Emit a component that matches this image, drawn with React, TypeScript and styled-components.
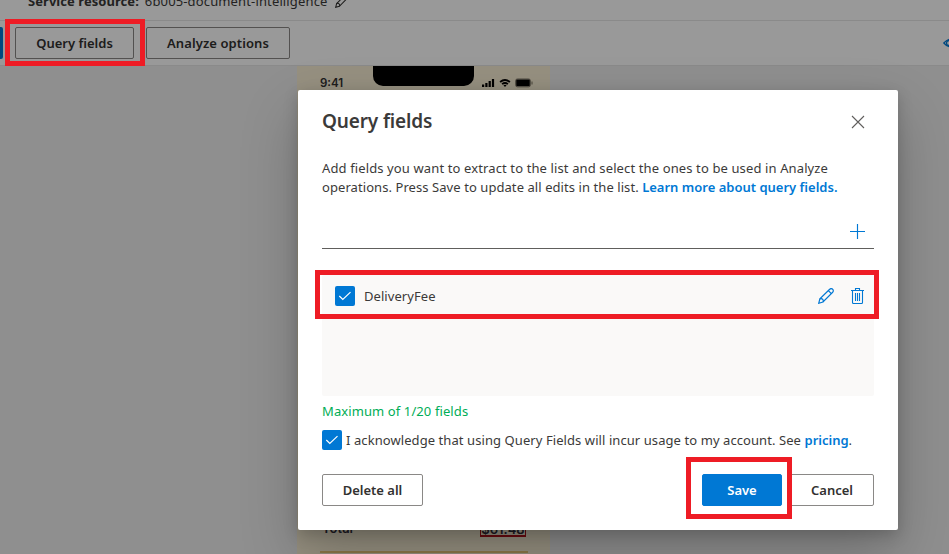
import React from "react";
import styled, { createGlobalStyle } from "styled-components";

const GlobalStyle = createGlobalStyle`
  *, *::before, *::after { box-sizing: border-box; }
  html, body { margin: 0; padding: 0; overflow: hidden; }
  body {
    font-family: "Noto Sans", "Open Sans", sans-serif;
    font-size: 13px;
    color: #3b3a39;
  }
  p, h2 { margin: 0; }
  button { font-family: inherit; }
`;

const Page = styled.div`
  position: relative;
  width: 949px;
  height: 554px;
  overflow: hidden;
  display: flex;
  flex-direction: column;
  background: #fff;
`;

const ResourceBar = styled.div`
  flex: none;
  display: flex;
  align-items: center;
  gap: 6px;
  height: 21px;
  padding: 0 0 19px 28px;
  border-bottom: 1px solid #e6e6e6;
  white-space: nowrap;
  font-size: 13px;
  line-height: 18px;
`;

const ResourceLabel = styled.span`
  font-weight: 700;
  letter-spacing: 0.05px;
`;

const ResourceName = styled.span`
  margin-right: 1px;
  letter-spacing: 0.14px;
`;

const Toolbar = styled.div`
  flex: none;
  display: flex;
  align-items: center;
  height: 45px;
  border-bottom: 1px solid #e6e6e6;
`;

const RunStub = styled.div`
  flex: none;
  width: 3px;
  height: 32px;
  margin-right: 12px;
  background: #0078d4;
  border-radius: 0 2px 2px 0;
`;

const Button = styled.button<{ $width: number; $primary?: boolean; $spacing?: number }>`
  flex: none;
  width: ${(p) => p.$width}px;
  height: 32px;
  padding: 0 0 1px;
  border: 1px solid ${(p) => (p.$primary ? "#0078d4" : "#8a8886")};
  border-radius: 2px;
  background: ${(p) => (p.$primary ? "#0078d4" : "#fff")};
  color: ${(p) => (p.$primary ? "#fff" : "#323130")};
  font-size: 13px;
  font-weight: 600;
  letter-spacing: ${(p) => p.$spacing ?? 0}px;
  white-space: nowrap;
`;

const ToolbarButton = styled(Button)`
  margin-right: 12px;
`;

const EyeIcon = styled.svg`
  flex: none;
  margin-left: 641px;
`;

const Canvas = styled.div`
  flex: 1;
  padding-left: 297px;
  background: #eeeeee;
`;

const Receipt = styled.div`
  display: flex;
  flex-direction: column;
  justify-content: space-between;
  width: 253px;
  height: 488px;
  background: #fbf0d6;
`;

const PhoneStatus = styled.div`
  display: flex;
  align-items: flex-start;
  height: 28px;
  padding-left: 23px;
`;

const Clock = styled.span`
  width: 53px;
  padding-top: 9px;
  font: 600 11.5px/17px Inter, sans-serif;
  color: #333;
`;

const Notch = styled.div`
  width: 101px;
  height: 20px;
  margin-right: 8px;
  background: #000;
  border-radius: 0 0 10px 10px;
`;

const StatusIcons = styled.svg`
  margin-top: 12px;
`;

const TotalBlock = styled.div`
  height: 35px;
  padding: 0 22px 0 23px;
`;

const TotalRow = styled.div`
  display: flex;
  justify-content: space-between;
  align-items: flex-start;
  height: 34px;
  padding: 1px 2px 0 2px;
  border-bottom: 2px solid #e8c878;
  font: 600 13px/17px Inter, sans-serif;
  color: #33313d;
`;

const TotalAmount = styled.span`
  width: 46px;
  height: 17px;
  border: 1px solid #b5121b;
  border-bottom-width: 2px;
  line-height: 16px;
  font-size: 13px;
  text-align: center;
`;

const Scrim = styled.div`
  position: absolute;
  inset: 0;
  background: rgba(0, 0, 0, 0.4);
`;

const Dialog = styled.section`
  position: absolute;
  left: 298px;
  top: 90px;
  width: 600px;
  height: 440px;
  padding: 0 24px 24px;
  display: flex;
  flex-direction: column;
  background: #fff;
  border-radius: 2px;
  box-shadow: 0 25.6px 57.6px rgba(0, 0, 0, 0.22), 0 4.8px 14.4px rgba(0, 0, 0, 0.18);
`;

const DialogHeader = styled.header`
  display: flex;
  align-items: center;
  justify-content: space-between;
  height: 64px;
  padding-right: 9px;
`;

const DialogTitle = styled.h2`
  font-size: 19px;
  font-weight: 600;
  line-height: 26px;
  letter-spacing: -0.15px;
  padding-bottom: 2px;
`;

const Description = styled.p`
  height: 38px;
  margin-top: 5px;
  font-size: 13px;
  line-height: 19px;
  white-space: nowrap;
`;

const Line = styled.span<{ $spacing?: number }>`
  display: block;
  letter-spacing: ${(p) => p.$spacing ?? 0}px;
`;

const Link = styled.a<{ $spacing?: number }>`
  color: #0078d4;
  font-weight: 600;
  letter-spacing: ${(p) => p.$spacing ?? 0}px;
`;

const NewField = styled.div`
  display: flex;
  align-items: center;
  justify-content: flex-end;
  height: 33px;
  margin-top: 19px;
  padding: 0 8px 1px 0;
  border-bottom: 1px solid #605e5c;
`;

const FieldList = styled.div`
  height: 121px;
  margin-top: 26px;
  background: #faf9f8;
  border-radius: 2px;
`;

const FieldRow = styled.div`
  display: flex;
  align-items: center;
  height: 42px;
  padding: 0 10px 0 13px;
`;

const FieldName = styled.span`
  flex: 1;
  margin-left: 9px;
  letter-spacing: 0.06px;
`;

const FieldActions = styled.div`
  display: flex;
  align-items: center;
  gap: 17px;
  padding-bottom: 1px;
`;

const Check = styled.span`
  display: flex;
  flex: none;
  align-items: center;
  justify-content: center;
  width: 20px;
  height: 20px;
  background: #0078d4;
  border-radius: 2px;
`;

const FieldCount = styled.p`
  margin-top: 6px;
  height: 18px;
  line-height: 18px;
  letter-spacing: 0.1px;
  color: #00ad56;
`;

const Acknowledge = styled.div`
  display: flex;
  align-items: center;
  gap: 4px;
  height: 20px;
  margin-top: 10px;
  white-space: nowrap;
`;

const DialogFooter = styled.footer`
  display: flex;
  justify-content: space-between;
  margin-top: 24px;
`;

const FooterActions = styled.div`
  display: flex;
  gap: 8px;
`;

const Highlight = styled.div<{ $x: number; $y: number; $w: number; $h: number }>`
  position: absolute;
  left: ${(p) => p.$x}px;
  top: ${(p) => p.$y}px;
  width: ${(p) => p.$w}px;
  height: ${(p) => p.$h}px;
  border: 5px solid #ee1c25;
  pointer-events: none;
`;

const Pencil = ({ size = 16, color = "#0078d4" }: { size?: number; color?: string }) => (
  <svg width={size} height={size} viewBox="0 0 17 17" fill="none" stroke={color} strokeWidth="1.25">
    <path d="M.8 16.2 2 11.6 12.4 1.3a2.2 2.2 0 0 1 3.2 0 2.2 2.2 0 0 1 0 3.2L5.3 14.9Z" />
    <path d="M2 11.6a2.4 2.4 0 0 1 3.3 3.3M11 2.7l3.2 3.2" />
  </svg>
);

const Trash = () => (
  <svg width="13" height="16" viewBox="0 0 13 16" fill="none" stroke="#0078d4" strokeWidth="1.1">
    <path d="M0 2.5h13M4.5 2.5v-2h4v2M1.5 2.5v12q0 1 1 1h8q1 0 1-1v-12M4.5 5v8M6.5 5v8M8.5 5v8" />
  </svg>
);

const CheckMark = () => (
  <svg width="14" height="10" viewBox="0 0 14 10" fill="none" stroke="#fff" strokeWidth="1.2">
    <path d="m1.3 5 3.5 3.5 7.7-7.4" />
  </svg>
);

export default function App() {
  return (
    <Page>
      <GlobalStyle />
      <ResourceBar>
        <ResourceLabel>Service resource:</ResourceLabel>
        <ResourceName>6b005-document-intelligence</ResourceName>
        <Pencil size={14} color="#323130" />
      </ResourceBar>
      <Toolbar>
        <RunStub />
        <ToolbarButton $width={119}>Query fields</ToolbarButton>
        <ToolbarButton $width={144} $spacing={0.1}>Analyze options</ToolbarButton>
        <EyeIcon width="16" height="10" viewBox="0 0 16 10" fill="none" stroke="#0078d4" strokeWidth="1.3">
          <path d="M.8 5Q8-3 15.2 5 8 13 .8 5Z" />
          <circle cx="6" cy="5" r="2.5" />
        </EyeIcon>
      </Toolbar>
      <Canvas>
        <Receipt>
          <PhoneStatus>
            <Clock>9:41</Clock>
            <Notch />
            <StatusIcons width="52" height="10" viewBox="0 0 52 10" fill="#000">
              <path d="M0 6.5h2.2V9H0zM3.3 5h2.2v4H3.300zM6.600 3h2.200v6H6.600zM9.900 1h2.200v8H9.900z" />
              <path d="M17.500 3.300q5.500-4.400 11 0L27.300 4.800q-4.300-3.400-8.600 0ZM19.500 5.400q3.500-2.800 7 0L25.300 6.800q-2.300-1.700-4.600 0ZM21.400 7.300q1.600-1.200 3.200 0L23 9Z" />
              <rect x="33.5" y=".9" width="15" height="8" rx="2" fill="none" stroke="#77705f" strokeWidth=".8" />
              <rect x="34.2" y="1.5" width="13.600" height="6.800" rx="1" />
              <rect x="49.5" y="3.5" width="1" height="3" fill="#77705f" />
            </StatusIcons>
          </PhoneStatus>
          <TotalBlock>
            <TotalRow>
              <span>Total</span>
              <TotalAmount>$61.48</TotalAmount>
            </TotalRow>
          </TotalBlock>
        </Receipt>
      </Canvas>
      <Scrim />
      <Dialog role="dialog">
        <DialogHeader>
          <DialogTitle>Query fields</DialogTitle>
          <svg width="14" height="14" viewBox="0 0 14 14" stroke="#605e5c" strokeWidth="1.1">
            <path d="m1 1 12 12M13 1 1 13" />
          </svg>
        </DialogHeader>
        <Description>
          <Line $spacing={0.12}>Add fields you want to extract to the list and select the ones to be used in Analyze</Line>
          <Line $spacing={0.07}>
            operations. Press Save to update all edits in the list. <Link>Learn more about query fields.</Link>
          </Line>
        </Description>
        <NewField>
          <svg width="17" height="17" viewBox="0 0 17 17" stroke="#0078d4" strokeWidth="1.15">
            <path d="M1 8.5h15M8.5 1v15" />
          </svg>
        </NewField>
        <FieldList>
          <FieldRow>
            <Check><CheckMark /></Check>
            <FieldName>DeliveryFee</FieldName>
            <FieldActions>
              <Pencil />
              <Trash />
            </FieldActions>
          </FieldRow>
        </FieldList>
        <FieldCount>Maximum of 1/20 fields</FieldCount>
        <Acknowledge>
          <Check><CheckMark /></Check>
          <Line $spacing={0.077}>
            I acknowledge that using Query Fields will incur usage to my account. See <Link>pricing</Link>.
          </Line>
        </Acknowledge>
        <DialogFooter>
          <Button $width={101}>Delete all</Button>
          <FooterActions>
            <Button $width={80} $primary>Save</Button>
            <Button $width={84}>Cancel</Button>
          </FooterActions>
        </DialogFooter>
      </Dialog>
      <Highlight $x={5} $y={19} $w={140} $h={47} />
      <Highlight $x={315} $y={270} $w={564} $h={49} />
      <Highlight $x={686} $y={457} $w={106} $h={62} />
    </Page>
  );
}
